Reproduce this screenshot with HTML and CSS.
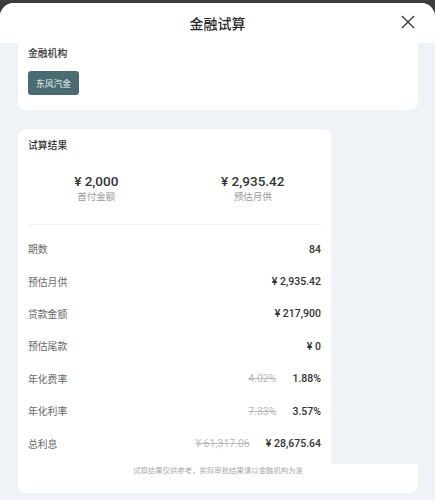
FILE: index.html
```html
<!DOCTYPE html>
<html lang="zh-CN">
<head>
    <meta charset="UTF-8">
    <meta name="viewport" content="width=device-width, initial-scale=1.0">
    <title>金融试算</title>
    <link rel="stylesheet" href="styles.css">
</head>
<body>

    <div class="sheet">
        <div class="sheet-header">
            <h1 class="sheet-title">金融试算</h1>
            <button class="close" aria-label="关闭">
                <svg width="14" height="14" viewBox="0 0 14 14">
                    <path d="M1 1 L13 13 M13 1 L1 13" stroke="#333" stroke-width="1.3" fill="none"/>
                </svg>
            </button>
        </div>

        <div class="sheet-body">
            <!-- 金融机构 -->
            <div class="card card-org">
                <div class="card-title">金融机构</div>
                <button class="org-tag">东风汽金</button>
            </div>

            <!-- 试算结果 -->
            <div class="result">
                <div class="result-main">
                    <div class="card-title">试算结果</div>
                    <div class="summary">
                        <div class="summary-item">
                            <div class="summary-value">¥ 2,000</div>
                            <div class="summary-label">首付金额</div>
                        </div>
                        <div class="summary-item">
                            <div class="summary-value">¥ 2,935.42</div>
                            <div class="summary-label">预估月供</div>
                        </div>
                    </div>
                    <div class="divider"></div>
                    <div class="row"><span class="row-label">期数</span><span class="row-value">84</span></div>
                    <div class="row"><span class="row-label">预估月供</span><span class="row-value">¥ 2,935.42</span></div>
                    <div class="row"><span class="row-label">贷款金额</span><span class="row-value">¥ 217,900</span></div>
                    <div class="row"><span class="row-label">预估尾款</span><span class="row-value">¥ 0</span></div>
                    <div class="row"><span class="row-label">年化费率</span><span class="row-value"><s class="old">4.02%</s>1.88%</span></div>
                    <div class="row"><span class="row-label">年化利率</span><span class="row-value"><s class="old">7.33%</s>3.57%</span></div>
                    <div class="row"><span class="row-label">总利息</span><span class="row-value"><s class="old">¥ 61,317.06</s>¥ 28,675.64</span></div>
                </div>
                <div class="result-note">试算结果仅供参考，实际审批结果请以金融机构为准</div>
            </div>
        </div>
    </div>

</body>
</html>
```

FILE: styles.css
```css
body {
    margin: 0;
    background-color: #3d3d3d;
    font-family: Roboto, "Noto Sans CJK SC", sans-serif;
    color: #333;
    height: 500px;
    overflow: hidden;
}

.sheet {
    margin-top: 3px;
    border-radius: 14px 14px 0 0;
    background-color: #eff3f7;
    height: 497px;
    overflow: hidden;
}

.sheet-header {
    position: relative;
    height: 40px;
    background-color: #fff;
    display: flex;
    justify-content: center;
    align-items: center;
}

.sheet-title {
    margin: 0;
    font-size: 14px;
    font-weight: 500;
    color: #2a2a2a;
}

.close {
    position: absolute;
    right: 20px;
    top: 12px;
    padding: 0;
    border: none;
    background: none;
    width: 14px;
    height: 14px;
}

.sheet-body {
    padding: 0 17px 0 18px;
}

.card {
    background-color: #fff;
    border-radius: 0 0 8px 8px;
}

.card-org {
    height: 67px;
    padding: 3px 10px 0;
    box-sizing: border-box;
}

.card-title {
    font-size: 9.8px;
    font-weight: 500;
    color: #333;
    line-height: 16px;
}

.org-tag {
    margin-top: 9px;
    width: 51px;
    height: 24px;
    padding: 0;
    border: none;
    border-radius: 3px;
    background-color: #4b6b73;
    color: #eef3f4;
    font-family: "Noto Sans CJK SC", sans-serif;
    font-size: 8.8px;
}

/* 试算结果 */
.result {
    margin-top: 19px;
}

.result-main {
    width: 313px;
    background-color: #fff;
    border-radius: 8px 8px 0 0;
    padding: 9px 0 4px;
}

.result-main .card-title {
    padding: 0 10px;
}

.summary {
    display: flex;
    margin-top: 18px;
}

.summary-item {
    flex: 1;
    text-align: center;
}

.summary-value {
    font-size: 13.5px;
    font-weight: 500;
    line-height: 18px;
    color: #333;
}

.summary-label {
    font-size: 9.5px;
    color: #999;
    line-height: 14px;
}

.divider {
    height: 1px;
    margin: 20px 10px 8px;
    background-color: #f2f3f5;
}

.row {
    display: flex;
    justify-content: space-between;
    align-items: center;
    height: 32.4px;
    padding: 0 10px;
    font-size: 10.5px;
}

.row-label {
    font-size: 9.8px;
    color: #666;
}

.row-value {
    color: #333;
    font-weight: 500;
}

.old {
    margin-right: 16px;
    color: #bbb;
    font-weight: 400;
}

.result-note {
    background-color: #fff;
    border-radius: 0 0 8px 8px;
    height: 29px;
    padding-top: 1px;
    box-sizing: border-box;
    text-align: center;
    font-size: 7.4px;
    line-height: 12px;
    color: #aaa;
}
```
